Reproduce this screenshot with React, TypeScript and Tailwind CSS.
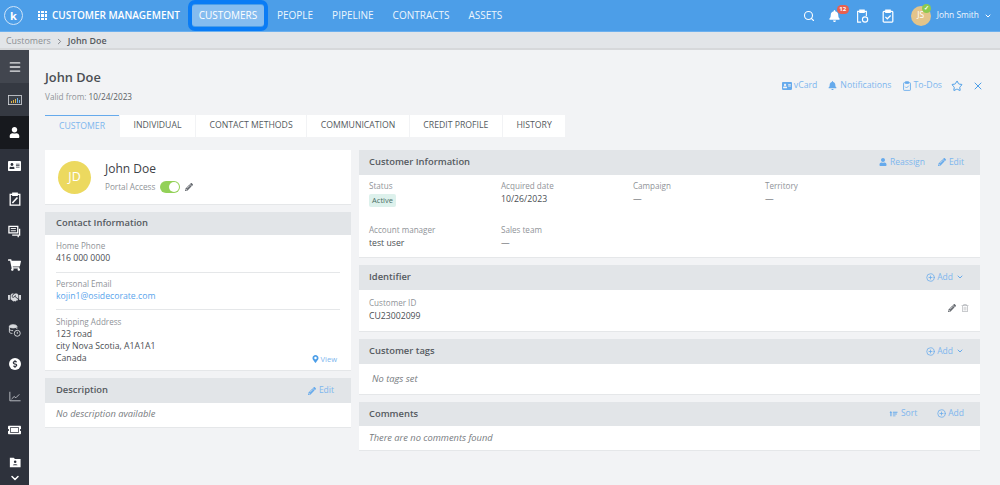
import { ChevronDown, ChevronRight, CirclePlus, Menu, Search, Star, X } from 'lucide-react';
import type { ReactNode } from 'react';
import {
  FaAddressCard,
  FaBell,
  FaDollarSign,
  FaHandshake,
  FaMapMarkerAlt,
  FaPencilAlt,
  FaRegTrashAlt,
  FaShoppingCart,
  FaTicketAlt,
  FaUser,
} from 'react-icons/fa';

function ClipboardCheck({ className = '' }: { className?: string }) {
  return (
    <svg viewBox="0 0 16 16" className={className} fill="none" stroke="currentColor" strokeWidth="1.4">
      <rect x="2.5" y="2.7" width="11" height="12.3" rx="1" />
      <path d="M5.5 1.2h5v2.6h-5z" fill="currentColor" />
      <path d="M5 9l2.2 2.2L11 7.4" />
    </svg>
  );
}

function ClipboardEdit({ className = '' }: { className?: string }) {
  return (
    <svg viewBox="0 0 16 16" className={className} fill="none" stroke="currentColor" strokeWidth="1.5">
      <rect x="2.5" y="2.7" width="11" height="12.3" />
      <path d="M5.5 1.2h5v2.6h-5z" fill="currentColor" />
      <path d="M5 12.5L10.8 6.2" strokeWidth="1.8" />
    </svg>
  );
}

function ClipboardClock({ className = '' }: { className?: string }) {
  return (
    <svg viewBox="0 0 16 16" className={className} fill="none" stroke="currentColor" strokeWidth="1.3">
      <path d="M7 15H3V2.7h10V8" />
      <path d="M5.5 1.2h5v2.6h-5z" fill="currentColor" />
      <circle cx="11.5" cy="12" r="3" />
    </svg>
  );
}

function ChartBox({ className = '' }: { className?: string }) {
  return (
    <svg viewBox="0 0 14 10" className={className}>
      <rect x="0.4" y="0.4" width="13.2" height="9.2" fill="#3b4048" stroke="#d5d8dc" strokeWidth="0.8" />
      <path d="M3 8V6h1v2zM5 8V5h1v3zM7 8V4h1v4z" fill="#e0b44a" />
      <path d="M9 8V3h1v5zM11 8V5h1v3z" fill="#6fb0e8" />
    </svg>
  );
}

function ChatLines({ className = '' }: { className?: string }) {
  return (
    <svg viewBox="0 0 14 14" className={className} fill="none" stroke="currentColor" strokeWidth="1.4">
      <path d="M1 1.5h9.5v7H1z" />
      <path d="M3 3.8h5.5M3 6.2h5.5" strokeWidth="1" />
      <path d="M12.5 4v7H4.5" />
      <path d="M11 11v2.2" />
    </svg>
  );
}

function CoinsClock({ className = '' }: { className?: string }) {
  return (
    <svg viewBox="0 0 14 14" className={className} fill="none" stroke="currentColor" strokeWidth="1">
      <ellipse cx="5.5" cy="2.5" rx="4" ry="1.7" fill="currentColor" />
      <path d="M1.5 2.5v6c0 .9 1.4 1.6 3.2 1.7M9.5 2.5v2.8M1.5 5.5c0 .9 1.6 1.7 4 1.7" />
      <circle cx="10" cy="10" r="3.2" fill="#2e323c" />
      <path d="M10 8.4V10.6" />
    </svg>
  );
}

function LineChart({ className = '' }: { className?: string }) {
  return (
    <svg viewBox="0 0 14 12" className={className} fill="none" stroke="currentColor" strokeWidth="1">
      <path d="M1 0.5V11h12.5" />
      <path d="M3 9l3-3 2 1.5 4-4" />
    </svg>
  );
}

function FolderUser({ className = '' }: { className?: string }) {
  return (
    <svg viewBox="0 0 14 12" className={className} fill="currentColor">
      <path d="M1 0.5h4.5L7 2h6.5v9.5H1z" />
      <circle cx="7.2" cy="5.2" r="1.5" fill="#2e323c" />
      <path d="M4.5 9.3c.3-1.7 5.1-1.7 5.4 0z" fill="#2e323c" />
    </svg>
  );
}

function SortIcon({ className = '' }: { className?: string }) {
  return (
    <svg viewBox="0 0 12 9" className={className} fill="currentColor">
      <path d="M2 0l2 2.5H3V8H1.3V2.5H0z" />
      <path d="M5 1h7v1.6H5zM5 3.8h6v1.6H5zM5 6.6h4v1.4H5z" />
    </svg>
  );
}

function SidebarItem({ children, className = '' }: { children: ReactNode; className?: string }) {
  return <div className={`flex h-[33px] shrink-0 items-center justify-center text-white ${className}`}>{children}</div>;
}

function Sidebar() {
  return (
    <aside className="flex w-[29px] shrink-0 flex-col overflow-hidden bg-[#2e323c]">
      <SidebarItem className="bg-[#42464f]">
        <Menu className="h-[14px] w-[14px] text-[#e6e7ea]" strokeWidth={2.4} />
      </SidebarItem>
      <SidebarItem className="bg-[#353942]">
        <ChartBox className="h-[10px] w-[14px]" />
      </SidebarItem>
      <SidebarItem className="bg-[#17191e]">
        <FaUser className="h-[11px] w-[11px]" />
      </SidebarItem>
      <SidebarItem>
        <FaAddressCard className="h-[12px] w-[13px]" />
      </SidebarItem>
      <SidebarItem>
        <ClipboardEdit className="h-[14px] w-[14px]" />
      </SidebarItem>
      <SidebarItem>
        <ChatLines className="h-[13px] w-[13px]" />
      </SidebarItem>
      <SidebarItem>
        <FaShoppingCart className="h-[12px] w-[13px]" />
      </SidebarItem>
      <SidebarItem>
        <FaHandshake className="h-[11px] w-[13px] text-[#d8dade]" />
      </SidebarItem>
      <SidebarItem>
        <CoinsClock className="h-[13px] w-[13px] text-[#d8dade]" />
      </SidebarItem>
      <SidebarItem>
        <div className="flex h-[12px] w-[12px] items-center justify-center rounded-full bg-white">
          <FaDollarSign className="h-[8px] w-[8px] text-[#2e323c]" />
        </div>
      </SidebarItem>
      <SidebarItem>
        <LineChart className="h-[11px] w-[12px] text-[#c9ccd1]" />
      </SidebarItem>
      <SidebarItem>
        <FaTicketAlt className="h-[12px] w-[13px]" />
      </SidebarItem>
      <SidebarItem>
        <FolderUser className="h-[11px] w-[12px]" />
      </SidebarItem>
      <div className="-mt-[7px] flex justify-center">
        <ChevronDown className="h-[12px] w-[12px] text-white" strokeWidth={3} />
      </div>
    </aside>
  );
}

function TopBar() {
  return (
    <header className="flex h-[32px] shrink-0 items-center border-b border-[#6cb0ee] bg-[#4c9ee8] pl-[4px] pr-[8px] text-white">
      <div className="flex h-[19px] w-[19px] items-center justify-center rounded-full border border-[#cfe4f8] text-[11px] font-bold leading-none">
        k
      </div>
      <div className="ml-[15px] grid h-[9px] w-[9px] grid-cols-3 gap-[1px]">
        {Array.from({ length: 9 }).map((_, i) => (
          <span key={i} className="bg-white" />
        ))}
      </div>
      <span className="ml-[5px] text-[10px] font-semibold">CUSTOMER MANAGEMENT</span>
      <div className="ml-[8px] flex h-[31px] items-center rounded-[7px] border-[4px] border-[#0a7cf5]">
        <div className="flex h-[21px] w-[72px] items-center justify-center rounded-[3px] bg-[#85bcef] text-[10px]">
          CUSTOMERS
        </div>
      </div>
      <nav className="ml-[9px] flex gap-[19px] text-[10px] text-[#eef6fd]">
        <span>PEOPLE</span>
        <span>PIPELINE</span>
        <span>CONTRACTS</span>
        <span>ASSETS</span>
      </nav>
      <div className="ml-auto flex items-center">
        <Search className="h-[12px] w-[12px]" strokeWidth={2.2} />
        <div className="relative ml-[14px]">
          <FaBell className="h-[12px] w-[11px]" />
          <span className="absolute -right-[9px] -top-[5px] flex h-[9px] w-[12px] items-center justify-center rounded-full bg-[#e8604f] text-[6px] font-bold leading-none">
            12
          </span>
        </div>
        <ClipboardClock className="ml-[15px] h-[14px] w-[14px]" />
        <ClipboardCheck className="ml-[12px] h-[14px] w-[14px]" />
        <div className="relative ml-[16px] flex h-[20px] w-[20px] items-center justify-center rounded-full bg-[#e3c48a] text-[8.5px]">
          JS
          <span className="absolute right-0 -top-[2px] flex h-[9px] w-[9px] items-center justify-center rounded-full bg-[#8ccb50] text-[6px] font-bold leading-none">
            ✓
          </span>
        </div>
        <span className="ml-[6px] text-[8.4px] text-[#eef6fd]">John Smith</span>
        <ChevronDown className="ml-[5px] h-[8px] w-[8px]" strokeWidth={3} />
      </div>
    </header>
  );
}

function PanelHeader({
  title,
  children,
  className = 'h-[24.5px] px-[10px]',
}: {
  title: string;
  children?: ReactNode;
  className?: string;
}) {
  return (
    <div className={`flex items-center justify-between bg-[#e2e5e8] ${className}`}>
      <span className="text-[9.4px] font-semibold text-[#555a60]">{title}</span>
      {children && <div className="flex items-center gap-[13px] pr-[6px] text-[8.5px] text-[#7db6ee]">{children}</div>}
    </div>
  );
}

function Panel({
  title,
  actions,
  headerClass,
  children,
}: {
  title: string;
  actions?: ReactNode;
  headerClass?: string;
  children: ReactNode;
}) {
  return (
    <section className="border-b border-[#e5e7e9] bg-white">
      <PanelHeader title={title} className={headerClass}>
        {actions}
      </PanelHeader>
      {children}
    </section>
  );
}

function Field({ label, value, className = '' }: { label: string; value: ReactNode; className?: string }) {
  return (
    <div className={className}>
      <div className="text-[8.1px] leading-[13px] text-[#8f9398]">{label}</div>
      <div className="mt-[1px] text-[8.7px] leading-[13px] text-[#4a4e53]">{value}</div>
    </div>
  );
}

// left column rows sit closer together than the grid fields on the right
function ContactField({ label, value, className = '' }: { label: string; value: ReactNode; className?: string }) {
  return (
    <div className={className}>
      <div className="text-[8.1px] leading-[12px] text-[#8f9398]">{label}</div>
      <div className="text-[8.7px] leading-[13px] text-[#4a4e53]">{value}</div>
    </div>
  );
}

function AddAction({ chevron = false }: { chevron?: boolean }) {
  return (
    <span className="flex items-center gap-[2px]">
      <CirclePlus className="h-[9px] w-[9px] text-[#66aaec]" />
      Add
      {chevron && <ChevronDown className="ml-[1px] h-[8px] w-[8px] text-[#66aaec]" strokeWidth={3} />}
    </span>
  );
}

function EditAction() {
  return (
    <span className="flex items-center gap-[3px]">
      <FaPencilAlt className="h-[8px] w-[8px] text-[#66aaec]" />
      Edit
    </span>
  );
}

const tabs = ['INDIVIDUAL', 'CONTACT METHODS', 'COMMUNICATION', 'CREDIT PROFILE', 'HISTORY'];

export default function App() {
  return (
    <div
      className="flex h-[485px] w-[1000px] flex-col overflow-hidden bg-[#f2f3f5]"
      style={{ fontFamily: '"Open Sans", "Noto Sans", sans-serif' }}
    >
      <TopBar />
      <div className="flex h-[18px] shrink-0 items-center gap-[4px] border-b-2 border-[#d6d8da] bg-[#e2e5e8] pl-[6px] pt-[2px] text-[8.9px]">
        <span className="text-[#8b8f94]">Customers</span>
        <ChevronRight className="h-[9px] w-[9px] text-[#777b80]" strokeWidth={2.4} />
        <span className="font-semibold text-[#55595e]">John Doe</span>
      </div>
      <div className="flex min-h-0 flex-1">
        <Sidebar />
        <main className="min-w-0 flex-1 pl-[16px] pr-[20px] pt-[17px]">
          <div className="flex items-start justify-between">
            <div>
              <h1 className="text-[12.8px] font-semibold leading-[20px] text-[#4a4e53]">John Doe</h1>
              <p className="mt-[4px] text-[8.2px] leading-[12px] text-[#8f9398]">
                Valid from: <span className="text-[#5b5f64]">10/24/2023</span>
              </p>
            </div>
            <div className="mr-[-4px] mt-[12px] flex items-center text-[8.7px] text-[#7db6ee]">
              <span className="flex items-center gap-[2px]">
                <FaAddressCard className="h-[10px] w-[10px] text-[#66aaec]" />
                vCard
              </span>
              <span className="ml-[11px] flex items-center gap-[3px]">
                <FaBell className="h-[9px] w-[9px] text-[#66aaec]" />
                Notifications
              </span>
              <span className="ml-[10px] flex items-center gap-[2px]">
                <ClipboardCheck className="h-[10px] w-[10px] text-[#66aaec]" />
                To-Dos
              </span>
              <Star className="ml-[9px] h-[12px] w-[12px] text-[#4c9ee8]" strokeWidth={2} />
              <X className="ml-[9px] h-[12px] w-[12px] text-[#4c9ee8]" strokeWidth={2} />
            </div>
          </div>

          <div className="mt-[12px] flex h-[22px] text-[8.7px] text-[#555a60]">
            <div className="flex w-[74px] items-center justify-center border-t border-[#66aaec] bg-[#f2f3f5] text-[#7db6ee]">
              CUSTOMER
            </div>
            {tabs.map((tab) => (
              <div key={tab} className="ml-px flex items-center bg-white px-[13.5px]">
                {tab}
              </div>
            ))}
          </div>

          <div className="mt-[13px] flex gap-[8px]">
            <div className="flex w-[306px] shrink-0 flex-col gap-[7px]">
              <section className="flex h-[55px] items-center border-b border-[#e5e7e9] bg-white pl-[13px]">
                <div className="flex h-[33px] w-[33px] items-center justify-center rounded-full bg-[#ecd95f] text-[12.5px] text-white">
                  JD
                </div>
                <div className="ml-[14px]">
                  <div className="text-[12px] leading-[17px] text-[#3d4146]">John Doe</div>
                  <div className="mt-[4px] flex items-center text-[8.2px] text-[#8f9398]">
                    Portal Access
                    <span className="ml-[5px] flex h-[12px] w-[20px] items-center justify-end rounded-full bg-[#93d158] pr-[1px]">
                      <span className="h-[10px] w-[10px] rounded-full bg-white" />
                    </span>
                    <FaPencilAlt className="ml-[5px] h-[8px] w-[8px] text-[#666a70]" />
                  </div>
                </div>
              </section>

              <section className="border-b border-[#e5e7e9] bg-white">
                <PanelHeader title="Contact Information" className="h-[23px] px-[11px]" />
                <div className="mx-[11px] pt-[5px]">
                  <ContactField label="Home Phone" value="416 000 0000" className="border-b border-[#e5e7e9] pb-[7px]" />
                  <ContactField
                    label="Personal Email"
                    value={<span className="text-[#5aa5ec]">kojin1@osidecorate.com</span>}
                    className="border-b border-[#e5e7e9] pb-[6px] pt-[5px]"
                  />
                  <div className="relative pb-[6px] pt-[5px]">
                    <div className="text-[8.1px] leading-[13px] text-[#8f9398]">Shipping Address</div>
                    <div className="text-[8.7px] leading-[12px] text-[#4a4e53]">
                      123 road
                      <br />
                      city Nova Scotia, A1A1A1
                      <br />
                      Canada
                    </div>
                    <span className="absolute bottom-[5px] right-[3px] flex items-center gap-[2px] text-[7.5px] text-[#7db6ee]">
                      <FaMapMarkerAlt className="h-[8px] w-[7px] text-[#4c9ee8]" />
                      View
                    </span>
                  </div>
                </div>
              </section>

              <Panel title="Description" headerClass="h-[25px] px-[11px]" actions={<EditAction />}>
                <div className="flex h-[24px] items-center px-[11px] pb-[3px] text-[9.3px] italic text-[#777b80]">
                  No description available
                </div>
              </Panel>
            </div>

            <div className="flex min-w-0 flex-1 flex-col gap-[7px]">
              <Panel
                title="Customer Information"
                actions={
                  <>
                    <span className="flex items-center gap-[3px]">
                      <FaUser className="h-[8px] w-[8px] text-[#66aaec]" />
                      Reassign
                    </span>
                    <EditAction />
                  </>
                }
              >
                <div className="grid grid-cols-[132px_132px_132px_1fr] px-[10px] pb-[7.5px] pt-[4.5px]">
                  <div className="h-[43.5px]">
                    <div className="text-[8.1px] leading-[13px] text-[#8f9398]">Status</div>
                    <span className="mt-[2px] block w-[27px] rounded-[2px] bg-[#ddf1ec] text-center text-[7.5px] leading-[13px] text-[#4a6e64]">
                      Active
                    </span>
                  </div>
                  <Field label="Acquired date" value="10/26/2023" />
                  <Field label="Campaign" value="—" />
                  <Field label="Territory" value="—" />
                  <Field label="Account manager" value="test user" />
                  <Field label="Sales team" value="—" />
                </div>
              </Panel>

              <Panel title="Identifier" actions={<AddAction chevron />}>
                <div className="flex items-start justify-between pb-[8px] pl-[10px] pr-[11px] pt-[6.5px]">
                  <Field label="Customer ID" value="CU23002099" />
                  <div className="mt-[8px] flex items-center gap-[5px]">
                    <FaPencilAlt className="h-[8px] w-[8px] text-[#666a70]" />
                    <FaRegTrashAlt className="h-[8px] w-[8px] text-[#b8bbbf]" />
                  </div>
                </div>
              </Panel>

              <Panel title="Customer tags" actions={<AddAction chevron />}>
                <div className="flex h-[30px] items-center px-[13px] text-[9.3px] italic text-[#777b80]">No tags set</div>
              </Panel>

              <Panel
                title="Comments"
                actions={
                  <>
                    <span className="flex items-center gap-[3px]">
                      <SortIcon className="h-[6px] w-[9px] text-[#66aaec]" />
                      Sort
                    </span>
                    <span className="ml-[7px]">
                      <AddAction />
                    </span>
                  </>
                }
              >
                <div className="flex h-[24px] items-center px-[10px] text-[9.3px] italic text-[#777b80]">
                  There are no comments found
                </div>
              </Panel>
            </div>
          </div>
        </main>
      </div>
    </div>
  );
}
